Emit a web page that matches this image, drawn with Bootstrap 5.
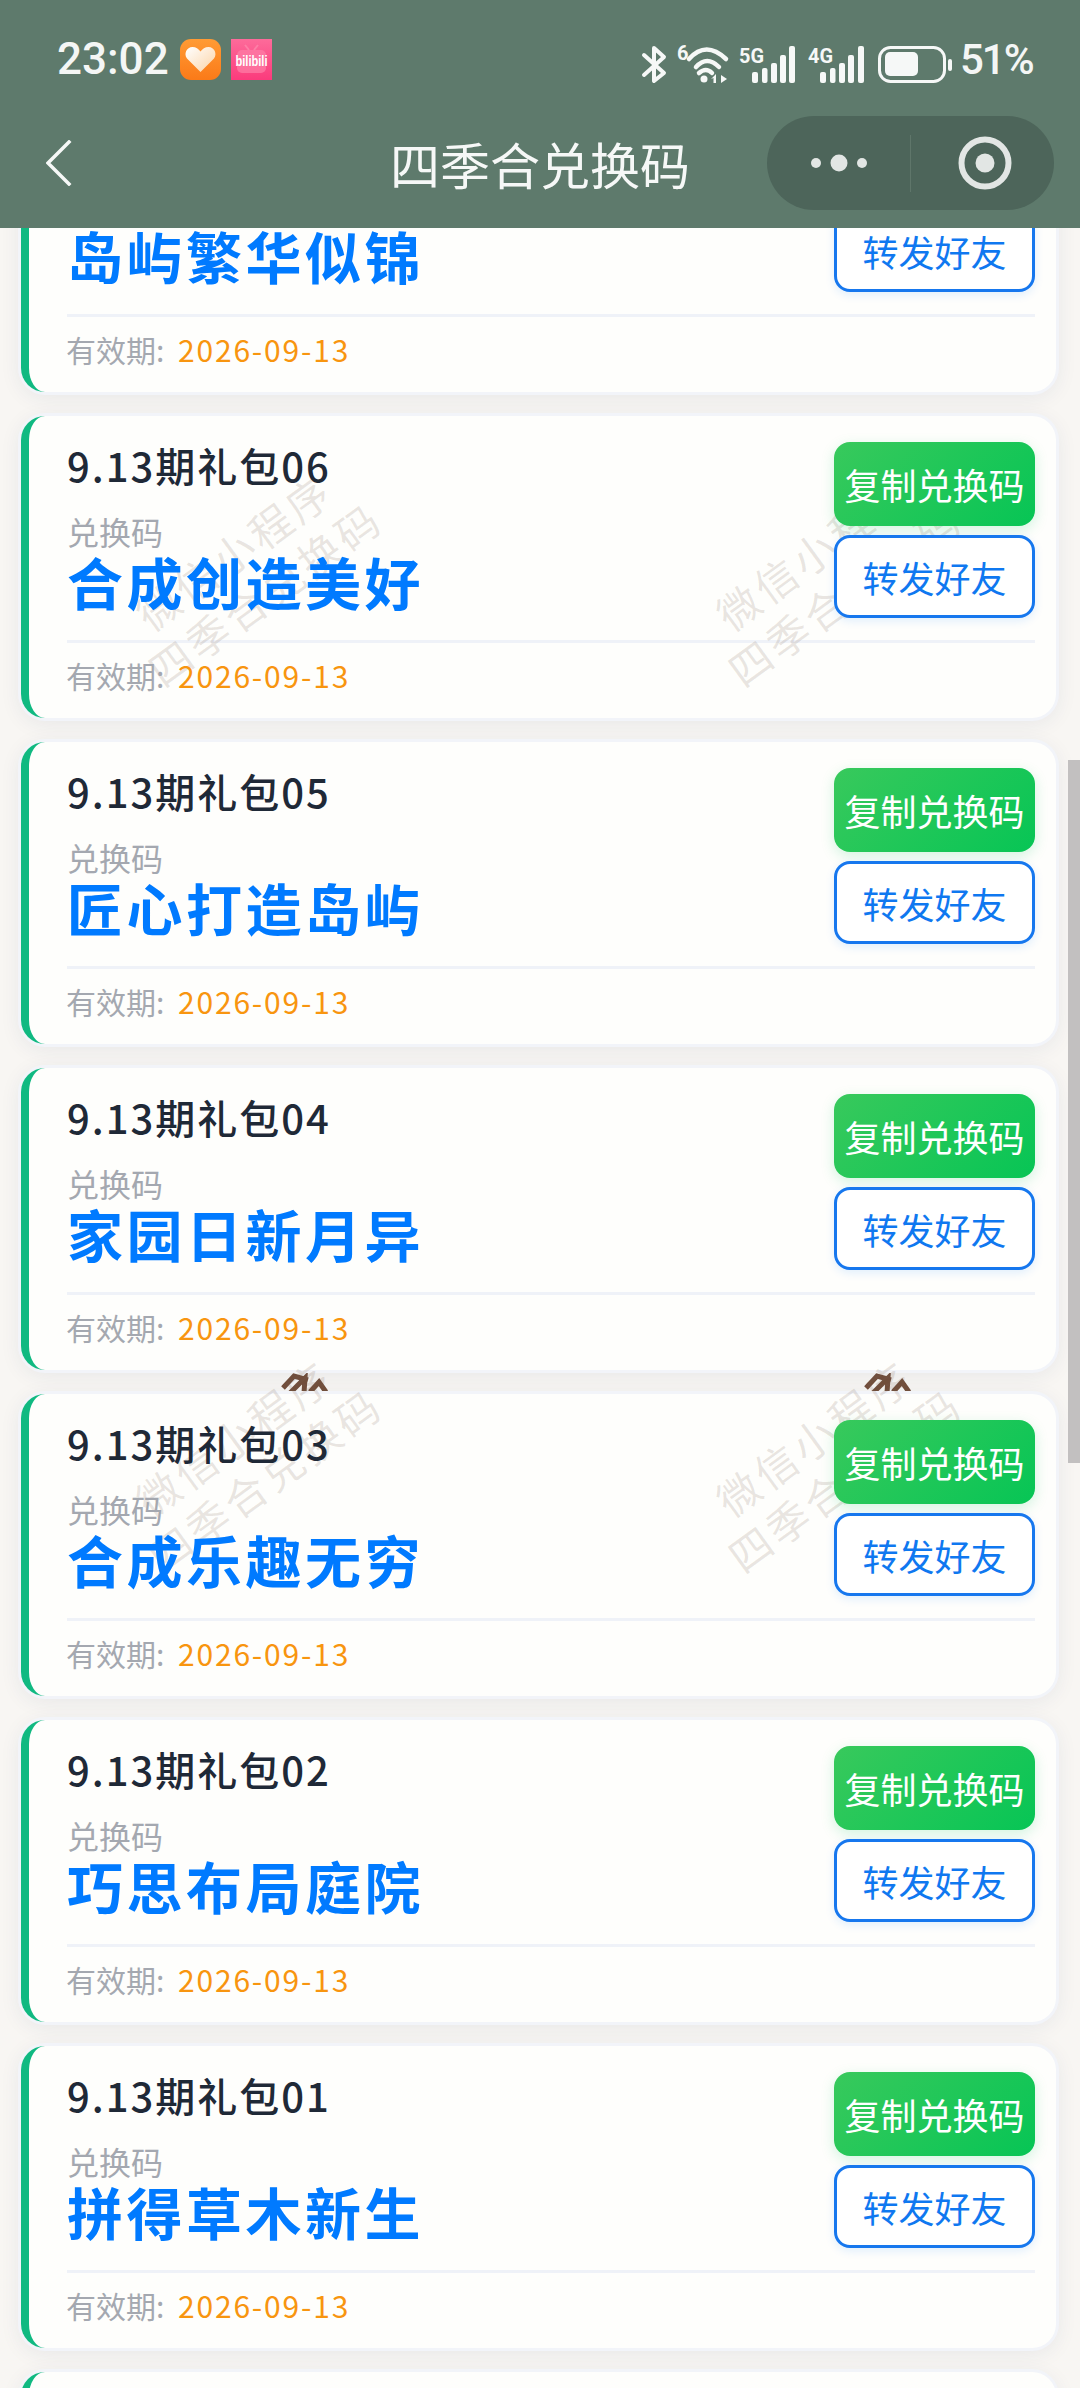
<!DOCTYPE html>
<html lang="zh-CN">
<head>
<meta charset="utf-8">
<title>四季合兑换码</title>
<link href="https://cdn.jsdelivr.net/npm/bootstrap@5.3.0/dist/css/bootstrap.min.css" rel="stylesheet">
<style>
html,body{height:2388px;overflow:hidden;background:#f8f6f3;font-family:"Noto Sans CJK SC","Noto Sans",sans-serif}
.screen{position:relative;width:1080px;height:2388px;overflow:hidden}
.appbar{position:absolute;top:0;left:0;width:100%;height:228px;background:#5e7a6c;z-index:5;color:#fff}
.statusrow{height:116px;padding:39px 49px 0 57px}
.clock,.pct{font-family:Roboto,sans-serif;font-weight:500;line-height:41px;color:#f4f6f5;white-space:nowrap}
.clock{font-size:44px;margin-right:11px}
.pct{font-size:42px;width:71px;letter-spacing:-2px;margin-left:8px}
.appicon{width:41px;height:41px}
.bili-icon{margin-left:10px}
.navrow{height:94px;display:grid;grid-template-columns:1fr auto 1fr;align-items:center;padding:0 26px 0 26px}
.navback{margin-left:20px}
.navtitle{font-size:50px;line-height:60px;color:#f6f8f7;font-weight:400}
.capsule{width:287px;height:94px;border-radius:47px;background:#4d655a}
.capsule svg{display:block}
.listwrap{padding:90px 24px 0 21px;position:relative}
.giftcard{position:relative;height:302px;margin-bottom:24px;background:#fefefc;border:0;border-left:8px solid #10b981;border-radius:24px;padding:26px 21px 0 38px;box-shadow:0 0 0 3px #f2f4f9,0 4px 22px rgba(30,50,100,.09)}
.gifttop{height:198px}
.gifttop>div{position:relative;z-index:2}
.gname{font-size:40px;line-height:46px;font-weight:500;color:#1f2937;letter-spacing:2px}
.glabel{font-size:32px;line-height:38px;color:#a4a8b0;margin-top:24px}
.gcode{font-size:56px;line-height:62px;font-weight:700;color:#007aff;letter-spacing:3.500px}
.gline{height:3px;background:#eff2f8;margin:0 0 0 -3px;opacity:1;border:0}
.btncopy,.btnshare{display:block;width:201px;padding:0;font-size:36px;border-radius:16px;line-height:1;white-space:nowrap}
.btncopy{height:84px;background:linear-gradient(135deg,#38c95c,#07c555);border:0;color:#fff;box-shadow:0 4px 14px rgba(7,193,96,.18)}
.btnshare{height:83px;margin-top:9px;background:#fff;border:3px solid #1677ee;color:#0f78f0;box-shadow:0 3px 10px rgba(0,122,255,.12)}
.gfoot{position:relative;z-index:2;font-size:30px;line-height:40px;color:#a4a8b0;padding-top:12px;margin-left:-1px}
.gdate{color:#f8950f;letter-spacing:1.800px;margin-left:7px}
.wmark{position:absolute;z-index:1;width:360px;text-align:center;font-size:42px;line-height:52px;letter-spacing:4px;color:rgba(120,95,80,.16);white-space:nowrap;transform:translate(-50%,-50%) rotate(-36deg);pointer-events:none}
.wm-a{left:249px;top:572px}.wm-b{left:829px;top:572px}.wm-c{left:249px;top:1458px}.wm-d{left:829px;top:1458px}
.brownmark{position:absolute;top:1366px}
.bm-a{left:280px}.bm-b{left:863px}
.scrollthumb{position:absolute;z-index:4;left:1068px;top:760px;width:12px;height:703px;background:#c2c0c0}
</style>
</head>
<body>
<div class="screen">

<svg class="brownmark bm-a" width="50" height="30" viewBox="0 0 50 30" fill="none" stroke="#74503c" stroke-width="5"><path d="M3 22 14 10 28 14M10 27 25 12 24 27M30 26 39 16 46 26"/></svg>
<svg class="brownmark bm-b" width="50" height="30" viewBox="0 0 50 30" fill="none" stroke="#74503c" stroke-width="5"><path d="M3 22 14 10 28 14M10 27 25 12 24 27M30 26 39 16 46 26"/></svg>

<header class="appbar">
  <div class="statusrow d-flex align-items-start">
    <span class="clock">23:02</span>
    <svg class="appicon" viewBox="0 0 41 41"><defs><linearGradient id="og" x1="0" y1="0" x2="0" y2="1"><stop offset="0" stop-color="#ff9b35"/><stop offset="1" stop-color="#fb7a18"/></linearGradient><linearGradient id="hg" x1="0" y1="0" x2="1" y2="1"><stop offset="0" stop-color="#fff"/><stop offset="1" stop-color="#fbd3a5"/></linearGradient></defs><rect width="41" height="41" rx="11" fill="url(#og)"/><path d="M20.500 33 7 19.500C3.500 15 6.500 8 12.500 8c3.500 0 6 1.800 8 4.500C22.500 9.800 25 8 28.500 8c6 0 9 7 5.500 11.500z" fill="url(#hg)"/></svg>
    <svg class="appicon bili-icon" viewBox="0 0 41 41"><defs><linearGradient id="pg" x1="0" y1="0" x2="0" y2="1"><stop offset="0" stop-color="#fd6b9a"/><stop offset="1" stop-color="#fb3b7c"/></linearGradient></defs><rect width="41" height="41" fill="url(#pg)"/><rect x="6" y="11" width="29" height="23" rx="5" fill="#fd7fa6" opacity=".7"/><path d="M14 6l4 5M27 6l-4 5" stroke="#fd7fa6" stroke-width="2"/><text x="20.500" y="27" text-anchor="middle" font-family="Liberation Sans" font-weight="700" font-size="14" textLength="32" lengthAdjust="spacingAndGlyphs" fill="#fff">bilibili</text></svg>
    <svg class="ms-auto" width="322" height="48" viewBox="630 34 322 48">
      <g fill="none" stroke="#f6f8f7" stroke-linecap="round" stroke-linejoin="round">
        <path stroke-width="4" d="M644 50 664 68 654 76V43L664 52 644 70"/>
        <path stroke-width="4.500" d="M689 54Q706 35 726 54M696 62Q707 50 719 62M699 68Q706 62 712 68"/>
      </g>
      <g fill="#f6f8f7">
        <text x="677" y="55" font-family="Roboto" font-weight="700" font-size="20">6</text>
        <circle cx="704" cy="74" r="3.500"/>
        <path d="M716 69v9h-2.500v-5l-2.500 1zM721 70l6 4-6 4z"/>
        <text x="739" y="58" font-family="Roboto" font-weight="700" font-size="21" textLength="25" lengthAdjust="spacingAndGlyphs">5G</text>
        <rect x="752" y="67" width="6" height="11" rx="2"/><rect x="762" y="63" width="5.500" height="15" rx="2"/><rect x="771" y="58" width="6" height="20" rx="2"/><rect x="780" y="50" width="6" height="28" rx="2"/><rect x="789" y="41" width="6" height="37" rx="2"/>
        <text x="808" y="58" font-family="Roboto" font-weight="700" font-size="21" textLength="25" lengthAdjust="spacingAndGlyphs">4G</text>
        <rect x="820" y="67" width="6" height="11" rx="2"/><rect x="830" y="63" width="5.500" height="15" rx="2"/><rect x="839" y="58" width="6" height="20" rx="2"/><rect x="848" y="50" width="6" height="28" rx="2"/><rect x="858" y="41" width="6" height="37" rx="2"/>
        <rect x="885" y="47" width="33" height="24" rx="5"/>
        <rect x="948" y="54" width="4" height="12" rx="2"/>
      </g>
      <rect x="879.500" y="42.500" width="65" height="34" rx="11" fill="none" stroke="#f6f8f7" stroke-width="3"/>
    </svg>
    <span class="pct">51%</span>
  </div>
  <div class="navrow">
    <svg class="navback" width="26" height="46" viewBox="0 0 26 46" fill="none" stroke="#f6f8f7" stroke-width="3.500" stroke-linecap="square"><path d="M23 2 2 23 23 44"/></svg>
    <div class="navtitle">四季合兑换码</div>
    <div class="capsule d-flex align-items-center ms-auto">
      <svg width="144" height="94" viewBox="0 0 144 94"><g fill="#e2e6e4"><circle cx="49" cy="47" r="5"/><circle cx="72" cy="47" r="8.500"/><circle cx="95" cy="47" r="5"/></g><path d="M143.500 19V76" stroke="#5f766a"/></svg>
      <svg width="143" height="94" viewBox="0 0 143 94"><circle cx="74" cy="47" r="23.500" fill="none" stroke="#e2e6e4" stroke-width="6"/><circle cx="74" cy="47" r="9.500" fill="#e2e6e4"/></svg>
    </div>
  </div>
</header>

<main class="listwrap">
  <article class="card giftcard">
    <div class="gifttop d-flex justify-content-between">
      <div><div class="gname">9.13期礼包07</div><div class="glabel">兑换码</div><div class="gcode">岛屿繁华似锦</div></div>
      <div><button class="btn btncopy">复制兑换码</button><button class="btn btnshare">转发好友</button></div>
    </div>
    <hr class="gline"><div class="gfoot">有效期: <span class="gdate">2026-09-13</span></div>
  </article>
  <article class="card giftcard">
    <div class="gifttop d-flex justify-content-between">
      <div><div class="gname">9.13期礼包06</div><div class="glabel">兑换码</div><div class="gcode">合成创造美好</div></div>
      <div><button class="btn btncopy">复制兑换码</button><button class="btn btnshare">转发好友</button></div>
    </div>
    <hr class="gline"><div class="gfoot">有效期: <span class="gdate">2026-09-13</span></div>
  </article>
  <article class="card giftcard">
    <div class="gifttop d-flex justify-content-between">
      <div><div class="gname">9.13期礼包05</div><div class="glabel">兑换码</div><div class="gcode">匠心打造岛屿</div></div>
      <div><button class="btn btncopy">复制兑换码</button><button class="btn btnshare">转发好友</button></div>
    </div>
    <hr class="gline"><div class="gfoot">有效期: <span class="gdate">2026-09-13</span></div>
  </article>
  <article class="card giftcard">
    <div class="gifttop d-flex justify-content-between">
      <div><div class="gname">9.13期礼包04</div><div class="glabel">兑换码</div><div class="gcode">家园日新月异</div></div>
      <div><button class="btn btncopy">复制兑换码</button><button class="btn btnshare">转发好友</button></div>
    </div>
    <hr class="gline"><div class="gfoot">有效期: <span class="gdate">2026-09-13</span></div>
  </article>
  <article class="card giftcard">
    <div class="gifttop d-flex justify-content-between">
      <div><div class="gname">9.13期礼包03</div><div class="glabel">兑换码</div><div class="gcode">合成乐趣无穷</div></div>
      <div><button class="btn btncopy">复制兑换码</button><button class="btn btnshare">转发好友</button></div>
    </div>
    <hr class="gline"><div class="gfoot">有效期: <span class="gdate">2026-09-13</span></div>
  </article>
  <article class="card giftcard">
    <div class="gifttop d-flex justify-content-between">
      <div><div class="gname">9.13期礼包02</div><div class="glabel">兑换码</div><div class="gcode">巧思布局庭院</div></div>
      <div><button class="btn btncopy">复制兑换码</button><button class="btn btnshare">转发好友</button></div>
    </div>
    <hr class="gline"><div class="gfoot">有效期: <span class="gdate">2026-09-13</span></div>
  </article>
  <article class="card giftcard">
    <div class="gifttop d-flex justify-content-between">
      <div><div class="gname">9.13期礼包01</div><div class="glabel">兑换码</div><div class="gcode">拼得草木新生</div></div>
      <div><button class="btn btncopy">复制兑换码</button><button class="btn btnshare">转发好友</button></div>
    </div>
    <hr class="gline"><div class="gfoot">有效期: <span class="gdate">2026-09-13</span></div>
  </article>
  <article class="card giftcard"></article>
</main>

<div class="wmark wm-a">微信小程序<br>四季合兑换码</div>
<div class="wmark wm-b">微信小程序<br>四季合兑换码</div>
<div class="wmark wm-c">微信小程序<br>四季合兑换码</div>
<div class="wmark wm-d">微信小程序<br>四季合兑换码</div>
<div class="scrollthumb"></div>
</div>
<script src="https://cdn.jsdelivr.net/npm/bootstrap@5.3.0/dist/js/bootstrap.bundle.min.js"></script>
</body>
</html>
